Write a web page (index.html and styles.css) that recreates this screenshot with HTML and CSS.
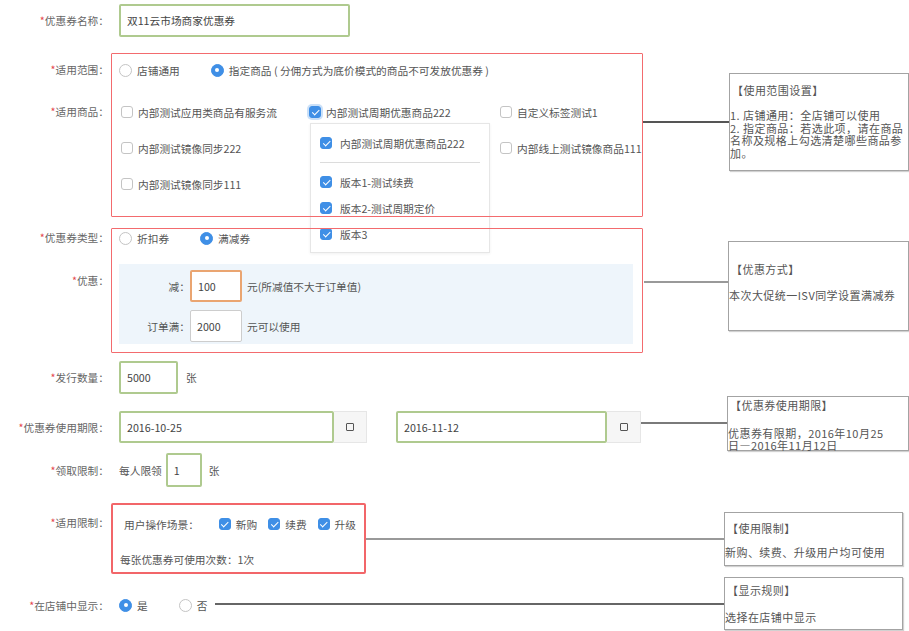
FILE: index.html
```html
<!DOCTYPE html>
<html lang="zh-CN">
<head>
<meta charset="utf-8">
<title>优惠券设置</title>
<link rel="stylesheet" href="styles.css">
</head>
<body>
<div class="canvas">
  <div class="form">
    <div class="row row-name">
      <div class="lbl"><i>*</i>优惠券名称：</div>
      <div class="ctl"><div class="input in-green in-name">双11云市场商家优惠券</div></div>
    </div>

    <div class="group group-goods">
      <div class="lbls">
        <div class="lbl l-scope"><i>*</i>适用范围：</div>
        <div class="lbl l-goods"><i>*</i>适用商品：</div>
      </div>
      <div class="box box-goods">
        <div class="opts scope">
          <span class="opt"><span class="radio"></span>店铺通用</span>
          <span class="opt"><span class="radio on"></span>指定商品 ( 分佣方式为底价模式的商品不可发放优惠券 )</span>
        </div>
        <div class="goods">
          <span class="opt"><span class="cb"></span>内部测试应用类商品有服务流</span>
          <span class="opt has-dd"><span class="cb on focus"></span>内部测试周期优惠商品222
            <span class="dropdown">
              <span class="dd-item"><span class="cb on"></span>内部测试周期优惠商品222</span>
              <span class="dd-sep"></span>
              <span class="dd-item"><span class="cb on"></span>版本1-测试续费</span>
              <span class="dd-item"><span class="cb on"></span>版本2-测试周期定价</span>
              <span class="dd-item"><span class="cb on"></span>版本3</span>
            </span>
          </span>
          <span class="opt"><span class="cb"></span>自定义标签测试1</span>
          <span class="opt"><span class="cb"></span>内部测试镜像同步222</span>
          <span class="opt"></span>
          <span class="opt"><span class="cb"></span>内部线上测试镜像商品111</span>
          <span class="opt"><span class="cb"></span>内部测试镜像同步111</span>
        </div>
      </div>
    </div>

    <div class="group group-type">
      <div class="lbls">
        <div class="lbl l-type"><i>*</i>优惠券类型：</div>
        <div class="lbl l-disc"><i>*</i>优惠：</div>
      </div>
      <div class="box box-type">
        <div class="opts type">
          <span class="opt"><span class="radio"></span>折扣券</span>
          <span class="opt"><span class="radio on"></span>满减券</span>
        </div>
        <div class="panel">
          <div class="prow">
            <div class="plbl">减：</div>
            <div class="input in-orange in-small">100</div>
            <span class="suffix">元(所减值不大于订单值)</span>
          </div>
          <div class="prow prow2">
            <div class="plbl">订单满：</div>
            <div class="input in-gray in-small">2000</div>
            <span class="suffix">元可以使用</span>
          </div>
        </div>
      </div>
    </div>

    <div class="row row-qty">
      <div class="lbl"><i>*</i>发行数量：</div>
      <div class="ctl">
        <div class="input in-green in-qty">5000</div>
        <span class="unit">张</span>
      </div>
    </div>

    <div class="row row-date">
      <div class="lbl"><i>*</i>优惠券使用期限：</div>
      <div class="ctl">
        <div class="date">
          <div class="input in-green in-date1">2016-10-25</div>
          <div class="addon"><span class="cal"></span></div>
        </div>
        <div class="date date2">
          <div class="input in-green in-date2">2016-11-12</div>
          <div class="addon addon2"><span class="cal"></span></div>
        </div>
      </div>
    </div>

    <div class="row row-limit">
      <div class="lbl"><i>*</i>领取限制：</div>
      <div class="ctl">
        <span>每人限领</span>
        <div class="input in-green in-one">1</div>
        <span class="unit2">张</span>
      </div>
    </div>

    <div class="group group-use">
      <div class="lbls">
        <div class="lbl l-use"><i>*</i>适用限制：</div>
      </div>
      <div class="usebox">
        <div class="use-r1">
          <span>用户操作场景：</span>
          <div class="opts use-opts">
            <span class="opt"><span class="cb on"></span>新购</span>
            <span class="opt"><span class="cb on"></span>续费</span>
            <span class="opt"><span class="cb on"></span>升级</span>
          </div>
        </div>
        <div class="use-r2">每张优惠券可使用次数：1次</div>
      </div>
    </div>

    <div class="row row-show">
      <div class="lbl"><i>*</i>在店铺中显示：</div>
      <div class="ctl opts show-opts">
        <span class="opt"><span class="radio on"></span>是</span>
        <span class="opt"><span class="radio"></span>否</span>
      </div>
    </div>
  </div>

  <div class="ln ln1"></div>
  <div class="ln ln2"></div>
  <div class="ln ln3"></div>
  <div class="ln ln4"></div>
  <div class="ln ln5"></div>

  <div class="note n1">
    <div class="nt">【使用范围设置】</div>
    <div class="nb">
      <div>1. 店铺通用：全店铺可以使用</div>
      <div>2. 指定商品：若选此项，请在商品</div>
      <div>名称及规格上勾选清楚哪些商品参</div>
      <div>加。</div>
    </div>
  </div>
  <div class="note n2">
    <div class="nt">【优惠方式】</div>
    <div class="nb"><div>本次大促统一ISV同学设置满减券</div></div>
  </div>
  <div class="note n3">
    <div class="nt">【优惠券使用期限】</div>
    <div class="nb">
      <div>优惠券有限期，2016年10月25</div>
      <div>日—2016年11月12日</div>
    </div>
  </div>
  <div class="note n4">
    <div class="nt">【使用限制】</div>
    <div class="nb"><div>新购、续费、升级用户均可使用</div></div>
  </div>
  <div class="note n5">
    <div class="nt">【显示规则】</div>
    <div class="nb"><div>选择在店铺中显示</div></div>
  </div>
</div>
</body>
</html>
```

FILE: styles.css
```css
body {
  margin: 0;
  background: #fff;
  font-family: "Noto Sans CJK SC", "Noto Sans", sans-serif;
  font-size: 10.7px;
  color: #555;
}

.canvas {
  position: relative;
  width: 909px;
  height: 631px;
  overflow: hidden;
}

.form {
  padding-top: 4px;
}

/* labels */
.lbl {
  width: 111px;
  box-sizing: border-box;
  padding-right: 2px;
  text-align: right;
  white-space: nowrap;
  color: #666;
  flex: none;
}
.lbl i {
  font-style: normal;
  color: #e5484d;
}

.row {
  display: flex;
  align-items: center;
}
.ctl {
  display: flex;
  align-items: center;
  margin-left: 8px;
}

/* inputs */
.input {
  box-sizing: border-box;
  display: flex;
  align-items: center;
  padding-left: 6px;
  color: #444;
  background: #fff;
  border-radius: 2px;
  flex: none;
}
.in-green { border: 2px solid #afca8f; }
.in-orange { border: 2px solid #eaa571; }
.in-gray { border: 1.5px solid #cdcdcd; }

.in-name { width: 231px; height: 33px; }

/* option controls */
.opts {
  display: flex;
  align-items: center;
  gap: 31px;
}
.opt {
  display: flex;
  align-items: center;
  gap: 5px;
  white-space: nowrap;
}
.radio {
  position: relative;
  width: 13px;
  height: 13px;
  box-sizing: border-box;
  border: 1px solid #c4c4c4;
  border-radius: 50%;
  background: #fff;
  flex: none;
}
.radio.on {
  background: #3f8fe6;
  border-color: #3f8fe6;
}
.radio.on::after {
  content: "";
  position: absolute;
  left: 50%;
  top: 50%;
  width: 4px;
  height: 4px;
  margin: -2px 0 0 -2px;
  border-radius: 50%;
  background: #fff;
}
.cb {
  position: relative;
  width: 12px;
  height: 12px;
  box-sizing: border-box;
  border: 1px solid #c4c4c4;
  border-radius: 3px;
  background: #fff;
  flex: none;
}
.cb.on {
  background: #3f8fe6;
  border-color: #3f8fe6;
}
.cb.on::after {
  content: "";
  position: absolute;
  left: 3.5px;
  top: 1.2px;
  width: 2.5px;
  height: 5.5px;
  border: solid #fff;
  border-width: 0 1.5px 1.5px 0;
  transform: rotate(45deg);
}
.cb.focus {
  box-shadow: 0 0 0 2px rgba(63, 143, 230, 0.28);
}

/* red grouping boxes */
.group {
  display: flex;
}
.lbls {
  width: 111px;
  flex: none;
}
.group .box {
  position: relative;
  box-sizing: border-box;
}
.group .box::after {
  content: "";
  position: absolute;
  left: 0;
  top: 0;
  right: 0;
  bottom: 0;
  border: 1.5px solid #f36b6e;
  border-radius: 1px;
  z-index: 3;
  pointer-events: none;
}

/* group 1: scope + goods */
.group-goods { margin-top: 16px; }
.l-scope { margin-top: 1px; height: 32px; line-height: 32px; }
.l-goods { margin-top: 8px; height: 36px; line-height: 36px; }
.box-goods {
  width: 532px;
  height: 164px;
  padding: 1px 0 0 8px;
}
.scope { height: 32px; }
.goods {
  margin-top: 8px;
  padding-left: 2px;
  display: grid;
  grid-template-columns: 188px 191px 1fr;
  grid-auto-rows: 36px;
}
.goods .opt { height: 36px; }
.has-dd { position: relative; }

.dropdown {
  position: absolute;
  left: 1px;
  top: 29px;
  width: 180px;
  height: 130px;
  box-sizing: border-box;
  padding-top: 6px;
  background: #fff;
  border: 1px solid #e6e6e6;
  box-shadow: 0 1px 3px rgba(0, 0, 0, 0.06);
  z-index: 2;
  display: flex;
  flex-direction: column;
}
.dd-item {
  height: 26px;
  display: flex;
  align-items: center;
  gap: 8px;
  padding-left: 9px;
}
.dd-sep {
  height: 1px;
  margin: 6px 9px;
  background: #dcdcdc;
}

/* group 2: type + discount */
.group-type { margin-top: 11px; }
.l-type { margin-top: 1px; height: 18px; line-height: 18px; }
.l-disc { margin-top: 25px; height: 18px; line-height: 18px; }
.box-type {
  width: 532px;
  height: 125px;
  padding: 1px 10px 0 8px;
}
.type { height: 18px; }
.panel {
  margin-top: 17px;
  height: 80px;
  box-sizing: border-box;
  padding-top: 6px;
  background: #eef5fb;
}
.prow {
  display: flex;
  align-items: center;
}
.prow2 { margin-top: 8px; }
.plbl {
  width: 71px;
  text-align: right;
  color: #555;
  flex: none;
}
.in-small { width: 52px; height: 32px; }
.suffix { margin-left: 5px; }

/* quantity */
.row-qty { margin-top: 8px; }
.in-qty { width: 59px; height: 33px; }
.unit { margin-left: 8px; }

/* dates */
.row-date { margin-top: 17px; }
.date { display: flex; }
.date2 { margin-left: 29px; }
.in-date1 { width: 215px; height: 32px; }
.in-date2 { width: 211px; height: 32px; }
.addon {
  width: 33px;
  height: 32px;
  box-sizing: border-box;
  display: flex;
  align-items: center;
  justify-content: center;
  background: #f6f6f6;
  border: 1px solid #e6e6e6;
  border-left: none;
}
.addon2 { width: 34px; }
.cal {
  width: 8px;
  height: 8px;
  box-sizing: border-box;
  border: 1.5px solid #555;
  border-radius: 1px;
}

/* limit */
.row-limit { margin-top: 10px; }
.in-one { width: 36px; height: 34px; margin-left: 4px; }
.unit2 { margin-left: 7px; }

/* group 3: usage */
.group-use { margin-top: 16px; }
.l-use { margin-top: 1px; height: 38px; line-height: 38px; }
.usebox {
  width: 255px;
  height: 71px;
  box-sizing: border-box;
  border: 2px solid #f26669;
  border-radius: 2px;
}
.use-r1 {
  height: 38px;
  display: flex;
  align-items: center;
  padding-left: 11px;
}
.use-opts {
  margin-left: 20px;
  gap: 11px;
}
.use-r2 {
  margin-top: 7px;
  line-height: 20px;
  padding-left: 7px;
}

/* show in shop */
.row-show { margin-top: 20px; height: 22px; }

/* connector lines */
.ln {
  position: absolute;
  height: 2px;
  background: #999;
}
.ln1 { left: 643px; top: 121px; width: 86px; height: 1.5px; background: #555; }
.ln2 { left: 644px; top: 281px; width: 84px; }
.ln3 { left: 641px; top: 422px; width: 86px; background: #7a7a7a; height: 1.5px; }
.ln4 { left: 366px; top: 538px; width: 358px; }
.ln5 { left: 215px; top: 603px; width: 509px; background: #666; height: 1.5px; }

/* annotation notes */
.note {
  position: absolute;
  box-sizing: border-box;
  background: #fff;
  border: 1px solid #a3a3a3;
  box-shadow: 1px 1px 1px rgba(0, 0, 0, 0.18);
  font-size: 11px;
  letter-spacing: 0.45px;
  line-height: 12.8px;
  color: #555;
  white-space: nowrap;
}
.nt { padding-left: 2px; }
.nb { padding-left: 0; }

.n1 { left: 729px; top: 73px; width: 180px; height: 98px; padding-top: 10px; }
.n1 .nb { margin-top: 12px; }
.n2 { left: 728px; top: 241px; width: 181px; height: 90px; padding-top: 21px; }
.n2 .nb { margin-top: 13px; }
.n3 { left: 727px; top: 396px; width: 182px; height: 55px; padding-top: 2px; }
.n3 .nb { margin-top: 15px; line-height: 12px; }
.n4 { left: 724px; top: 512px; width: 179px; height: 54px; padding-top: 9px; }
.n4 .nb { margin-top: 11px; }
.n5 { left: 724px; top: 577px; width: 179px; height: 53px; padding-top: 6px; }
.n5 .nb { margin-top: 14px; }
```
